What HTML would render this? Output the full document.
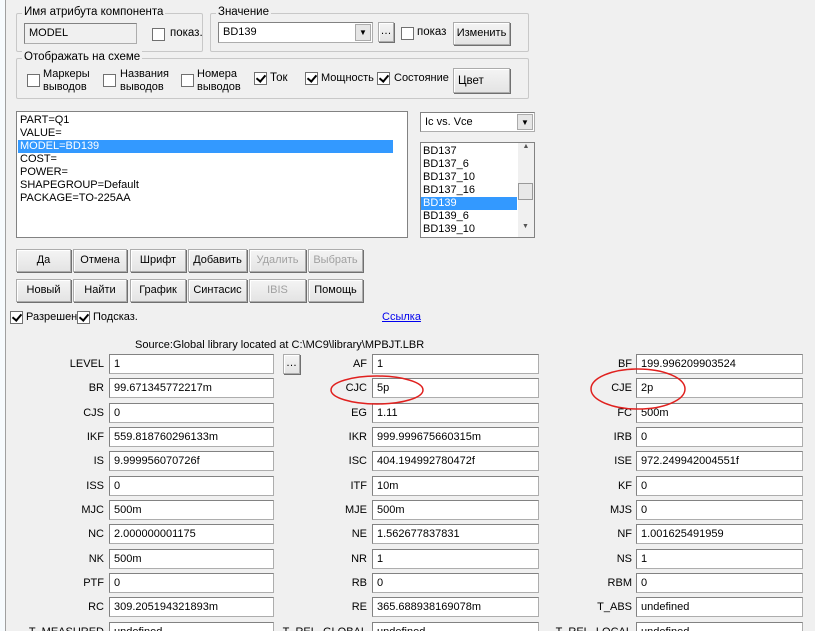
<!DOCTYPE html>
<html><head><meta charset="utf-8"><style>
*{box-sizing:border-box;margin:0;padding:0}
html,body{width:815px;height:631px;overflow:hidden}
body{background:#f0f0f0;font-family:"Liberation Sans",sans-serif;font-size:11px;color:#000;position:relative}
.a{position:absolute;white-space:nowrap}
.g{position:absolute;border:1px solid #c8c8c8;border-radius:2px}
.gl{position:absolute;top:-8px;left:5px;background:#f0f0f0;padding:0 2px;font-size:11.5px}
.cb{position:absolute;width:13px;height:13px;border:1px solid #707070;background:#fff}
.cb.c::after{content:"";position:absolute;left:3px;top:0px;width:4px;height:7px;border:solid #000;border-width:0 2px 2px 0;transform:rotate(40deg)}
.btn{position:absolute;height:23px;background:linear-gradient(#f4f4f4,#e4e4e4);border:1px solid #acacac;box-shadow:inset 1px 1px #fff,1px 1px #707070;text-align:center;line-height:21px;font-size:11px}
.dis{color:#a0a0a0}
.f{position:absolute;height:20px;background:#fff;border:1px solid #adadad;border-top-color:#828282;border-left-color:#828282;padding-left:4px;line-height:18px;font-size:11px}
.l{position:absolute;text-align:right;line-height:20px;font-size:11px}
.li{height:13px;line-height:13px;padding-left:2px;font-size:11px}
.sel{background:#3399ff;color:#fff}
</style></head><body>
<div class="a" style="left:0;top:0;width:5px;height:631px;background:#f7fbfe"></div>
<div class="a" style="left:5px;top:0;width:1px;height:631px;background:#a0a0a0"></div>

<div class="g" style="left:16px;top:13px;width:187px;height:39px"><span class="gl">Имя атрибута компонента</span></div>
<div class="f" style="left:24px;top:23px;width:113px;height:21px;background:#f0f0f0;color:#000">MODEL</div>
<div class="cb" style="left:152px;top:28px"></div><div class="a" style="left:170px;top:27px;font-size:11.5px">показ.</div>

<div class="g" style="left:210px;top:13px;width:319px;height:39px"><span class="gl">Значение</span></div>
<div class="f" style="left:218px;top:22px;width:155px;height:21px">BD139</div>
<div class="a" style="left:355px;top:24px;width:16px;height:17px;background:#e6e6e6;border:1px solid #aaa;font-size:8px;text-align:center;line-height:16px">▼</div>
<div class="btn" style="left:378px;top:22px;width:16px;height:20px;line-height:16px">…</div>
<div class="cb" style="left:401px;top:27px"></div><div class="a" style="left:417px;top:26px;font-size:11.5px">показ</div>
<div class="btn" style="left:453px;top:22px;width:57px;height:23px">Изменить</div>

<div class="g" style="left:16px;top:58px;width:513px;height:41px"><span class="gl">Отображать на схеме</span></div>
<div class="cb" style="left:27px;top:74px"></div><div class="a" style="left:43px;top:68px;line-height:13px;font-size:11px">Маркеры<br>выводов</div>
<div class="cb" style="left:103px;top:74px"></div><div class="a" style="left:120px;top:68px;line-height:13px;font-size:11px">Названия<br>выводов</div>
<div class="cb" style="left:181px;top:74px"></div><div class="a" style="left:197px;top:68px;line-height:13px;font-size:11px">Номера<br>выводов</div>
<div class="cb c" style="left:254px;top:72px"></div><div class="a" style="left:270px;top:72px;font-size:11.5px">Ток</div>
<div class="cb c" style="left:305px;top:72px"></div><div class="a" style="left:321px;top:72px;font-size:11px">Мощность</div>
<div class="cb c" style="left:377px;top:72px"></div><div class="a" style="left:394px;top:72px;font-size:11px">Состояние</div>
<div class="btn" style="left:453px;top:68px;width:57px;height:25px;line-height:24px;text-align:left;padding-left:4px;font-size:11.5px">Цвет</div>

<div class="a" style="left:16px;top:111px;width:392px;height:127px;background:#fff;border:1px solid #828282;padding:2px 1px">
<div class="li">PART=Q1</div><div class="li">VALUE=</div><div class="li sel" style="width:375px">MODEL=BD139</div><div class="li">COST=</div><div class="li">POWER=</div><div class="li">SHAPEGROUP=Default</div><div class="li">PACKAGE=TO-225AA</div></div>

<div class="f" style="left:420px;top:112px;width:115px;height:20px">Ic vs. Vce</div>
<div class="a" style="left:517px;top:114px;width:16px;height:16px;background:#e6e6e6;border:1px solid #aaa;font-size:8px;text-align:center;line-height:15px">▼</div>
<div class="a" style="left:420px;top:142px;width:115px;height:96px;background:#fff;border:1px solid #828282;padding-top:2px">
<div class="li">BD137</div><div class="li">BD137_6</div><div class="li">BD137_10</div><div class="li">BD137_16</div><div class="li sel" style="width:96px">BD139</div><div class="li">BD139_6</div><div class="li">BD139_10</div>
<div class="a" style="left:97px;top:0;width:16px;height:94px;background:#f0f0f0;font-size:7px;color:#555;text-align:center">▲<div class="a" style="left:0;top:40px;width:15px;height:17px;background:#e8e8e8;border:1px solid #999"></div><div class="a" style="left:4px;top:80px">▼</div></div></div>

<div class="btn" style="left:16px;top:249px;width:55px">Да</div>
<div class="btn" style="left:73px;top:249px;width:54px">Отмена</div>
<div class="btn" style="left:130px;top:249px;width:56px">Шрифт</div>
<div class="btn" style="left:188px;top:249px;width:59px">Добавить</div>
<div class="btn dis" style="left:249px;top:249px;width:57px">Удалить</div>
<div class="btn dis" style="left:308px;top:249px;width:55px">Выбрать</div>
<div class="btn" style="left:16px;top:279px;width:55px">Новый</div>
<div class="btn" style="left:73px;top:279px;width:54px">Найти</div>
<div class="btn" style="left:130px;top:279px;width:56px">График</div>
<div class="btn" style="left:188px;top:279px;width:59px">Синтасис</div>
<div class="btn dis" style="left:249px;top:279px;width:57px">IBIS</div>
<div class="btn" style="left:308px;top:279px;width:55px">Помощь</div>

<div class="cb c" style="left:10px;top:311px"></div><div class="a" style="left:26px;top:311px;font-size:11px">Разрешен</div>
<div class="cb c" style="left:77px;top:311px"></div><div class="a" style="left:93px;top:311px;font-size:11px">Подсказ.</div>
<div class="a" style="left:382px;top:311px;font-size:11px;color:#0000ee;text-decoration:underline">Ссылка</div>
<div class="a" style="left:135px;top:339px;font-size:11px">Source:Global library located at C:\MC9\library\MPBJT.LBR</div>
<div class="btn" style="left:283px;top:354px;width:17px;height:20px;line-height:16px">…</div>

<div class="l" style="left:0;width:104px;top:354px">LEVEL</div><div class="f" style="left:109px;top:354px;width:165px">1</div>
<div class="l" style="left:260px;width:107px;top:354px">AF</div><div class="f" style="left:372px;top:354px;width:167px">1</div>
<div class="l" style="left:520px;width:112px;top:354px">BF</div><div class="f" style="left:636px;top:354px;width:167px">199.996209903524</div>

<div class="l" style="left:0;width:104px;top:378px">BR</div><div class="f" style="left:109px;top:378px;width:165px">99.671345772217m</div>
<div class="l" style="left:260px;width:107px;top:378px">CJC</div><div class="f" style="left:372px;top:378px;width:167px">5p</div>
<div class="l" style="left:520px;width:112px;top:378px">CJE</div><div class="f" style="left:636px;top:378px;width:167px">2p</div>

<div class="l" style="left:0;width:104px;top:403px">CJS</div><div class="f" style="left:109px;top:403px;width:165px">0</div>
<div class="l" style="left:260px;width:107px;top:403px">EG</div><div class="f" style="left:372px;top:403px;width:167px">1.11</div>
<div class="l" style="left:520px;width:112px;top:403px">FC</div><div class="f" style="left:636px;top:403px;width:167px">500m</div>

<div class="l" style="left:0;width:104px;top:427px">IKF</div><div class="f" style="left:109px;top:427px;width:165px">559.818760296133m</div>
<div class="l" style="left:260px;width:107px;top:427px">IKR</div><div class="f" style="left:372px;top:427px;width:167px">999.999675660315m</div>
<div class="l" style="left:520px;width:112px;top:427px">IRB</div><div class="f" style="left:636px;top:427px;width:167px">0</div>

<div class="l" style="left:0;width:104px;top:451px">IS</div><div class="f" style="left:109px;top:451px;width:165px">9.999956070726f</div>
<div class="l" style="left:260px;width:107px;top:451px">ISC</div><div class="f" style="left:372px;top:451px;width:167px">404.194992780472f</div>
<div class="l" style="left:520px;width:112px;top:451px">ISE</div><div class="f" style="left:636px;top:451px;width:167px">972.249942004551f</div>

<div class="l" style="left:0;width:104px;top:476px">ISS</div><div class="f" style="left:109px;top:476px;width:165px">0</div>
<div class="l" style="left:260px;width:107px;top:476px">ITF</div><div class="f" style="left:372px;top:476px;width:167px">10m</div>
<div class="l" style="left:520px;width:112px;top:476px">KF</div><div class="f" style="left:636px;top:476px;width:167px">0</div>

<div class="l" style="left:0;width:104px;top:500px">MJC</div><div class="f" style="left:109px;top:500px;width:165px">500m</div>
<div class="l" style="left:260px;width:107px;top:500px">MJE</div><div class="f" style="left:372px;top:500px;width:167px">500m</div>
<div class="l" style="left:520px;width:112px;top:500px">MJS</div><div class="f" style="left:636px;top:500px;width:167px">0</div>

<div class="l" style="left:0;width:104px;top:524px">NC</div><div class="f" style="left:109px;top:524px;width:165px">2.000000001175</div>
<div class="l" style="left:260px;width:107px;top:524px">NE</div><div class="f" style="left:372px;top:524px;width:167px">1.562677837831</div>
<div class="l" style="left:520px;width:112px;top:524px">NF</div><div class="f" style="left:636px;top:524px;width:167px">1.001625491959</div>

<div class="l" style="left:0;width:104px;top:549px">NK</div><div class="f" style="left:109px;top:549px;width:165px">500m</div>
<div class="l" style="left:260px;width:107px;top:549px">NR</div><div class="f" style="left:372px;top:549px;width:167px">1</div>
<div class="l" style="left:520px;width:112px;top:549px">NS</div><div class="f" style="left:636px;top:549px;width:167px">1</div>

<div class="l" style="left:0;width:104px;top:573px">PTF</div><div class="f" style="left:109px;top:573px;width:165px">0</div>
<div class="l" style="left:260px;width:107px;top:573px">RB</div><div class="f" style="left:372px;top:573px;width:167px">0</div>
<div class="l" style="left:520px;width:112px;top:573px">RBM</div><div class="f" style="left:636px;top:573px;width:167px">0</div>

<div class="l" style="left:0;width:104px;top:597px">RC</div><div class="f" style="left:109px;top:597px;width:165px">309.205194321893m</div>
<div class="l" style="left:260px;width:107px;top:597px">RE</div><div class="f" style="left:372px;top:597px;width:167px">365.688938169078m</div>
<div class="l" style="left:520px;width:112px;top:597px">T_ABS</div><div class="f" style="left:636px;top:597px;width:167px">undefined</div>

<div class="l" style="left:0;width:104px;top:622px">T_MEASURED</div><div class="f" style="left:109px;top:622px;width:165px">undefined</div>
<div class="l" style="left:260px;width:107px;top:622px">T_REL_GLOBAL</div><div class="f" style="left:372px;top:622px;width:167px">undefined</div>
<div class="l" style="left:520px;width:112px;top:622px">T_REL_LOCAL</div><div class="f" style="left:636px;top:622px;width:167px">undefined</div>

<svg class="a" style="left:0;top:0" width="815" height="631"><g fill="none" stroke="#e0201e" stroke-width="1.5"><ellipse cx="377" cy="390" rx="46" ry="14"/><ellipse cx="638" cy="389" rx="47" ry="20"/></g></svg>
</body></html>
